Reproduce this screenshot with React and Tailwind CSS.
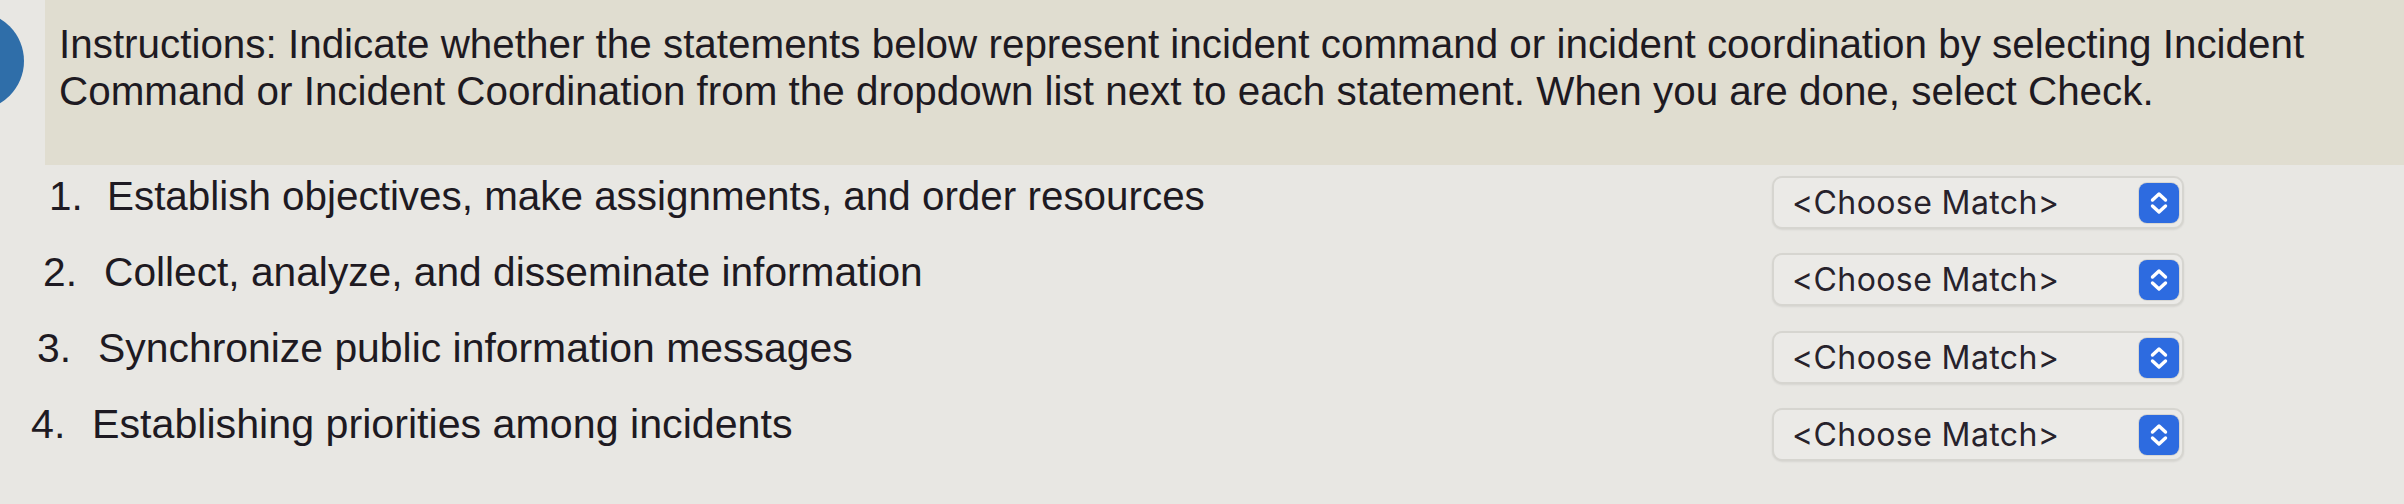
import React from "react";

const items = [
  { n: "1.", t: "Establish objectives, make assignments, and order resources", pl: "pl-[49px]", nw: "w-[58px]", mt: "mt-[2px]", fs: "text-[40.4px]" },
  { n: "2.", t: "Collect, analyze, and disseminate information", pl: "pl-[43px]", nw: "w-[61px]", mt: "mt-[3px]", fs: "text-[40.7px]" },
  { n: "3.", t: "Synchronize public information messages", pl: "pl-[37px]", nw: "w-[61px]", mt: "mt-[5px]", fs: "text-[40.9px]" },
  { n: "4.", t: "Establishing priorities among incidents", pl: "pl-[31px]", nw: "w-[61px]", mt: "mt-[6px]", fs: "text-[41.2px]" },
];

function Stepper() {
  return (
    <div className="w-[40px] h-[40px] rounded-[8px] bg-[#2d6be0] flex items-center justify-center shadow-[0_0_0_1px_#d7d6d2]">
      <svg width="40" height="40" viewBox="0 0 40 40" fill="none">
        <path d="M13.5 17 L20 11 L26.5 17" stroke="white" strokeWidth="3.4" strokeLinecap="round" strokeLinejoin="round" />
        <path d="M13.5 23 L20 29 L26.5 23" stroke="white" strokeWidth="3.4" strokeLinecap="round" strokeLinejoin="round" />
      </svg>
    </div>
  );
}

function Select({ mt }) {
  return (
    <div className={`${mt} w-[412px] h-[53px] rounded-[10px] border-2 border-[#d6d5d0] bg-[#ebeae7] shadow-[0_1px_2px_rgba(0,0,0,0.08)] flex items-center justify-between pl-[18px] pr-[3px]`}>
      <span className="text-[32px] tracking-[0.4px] leading-none text-[#27222c] font-['Inter',sans-serif]">&lt;Choose Match&gt;</span>
      <Stepper />
    </div>
  );
}

export default function App() {
  return (
    <div className="relative w-[2404px] h-[504px] overflow-hidden bg-[#e8e7e3] font-['Liberation_Sans',Arial,sans-serif] text-[#1e1a22]">
      <div className="absolute left-[-76px] top-[12px] w-[100px] h-[98px] rounded-full bg-[#2f6ea9]" />
      <div className="ml-[45px] h-[165px] bg-[#e0ddd0] pl-[14px] pt-[21px]">
        <p className="text-[40.4px] leading-[47px]">
          Instructions: Indicate whether the statements below represent incident command or incident coordination by selecting Incident
          <br />
          Command or Incident Coordination from the dropdown list next to each statement. When you are done, select Check.
        </p>
      </div>
      <div className="mt-[9px] flex flex-col">
        {items.map((it) => (
          <div key={it.n} className={`h-[76px] flex items-start justify-between pr-[220px] ${it.pl}`}>
            <div className={`flex ${it.fs} leading-[44px]`}>
              <span className={it.nw}>{it.n}</span>
              <span>{it.t}</span>
            </div>
            <Select mt={it.mt} />
          </div>
        ))}
      </div>
    </div>
  );
}
